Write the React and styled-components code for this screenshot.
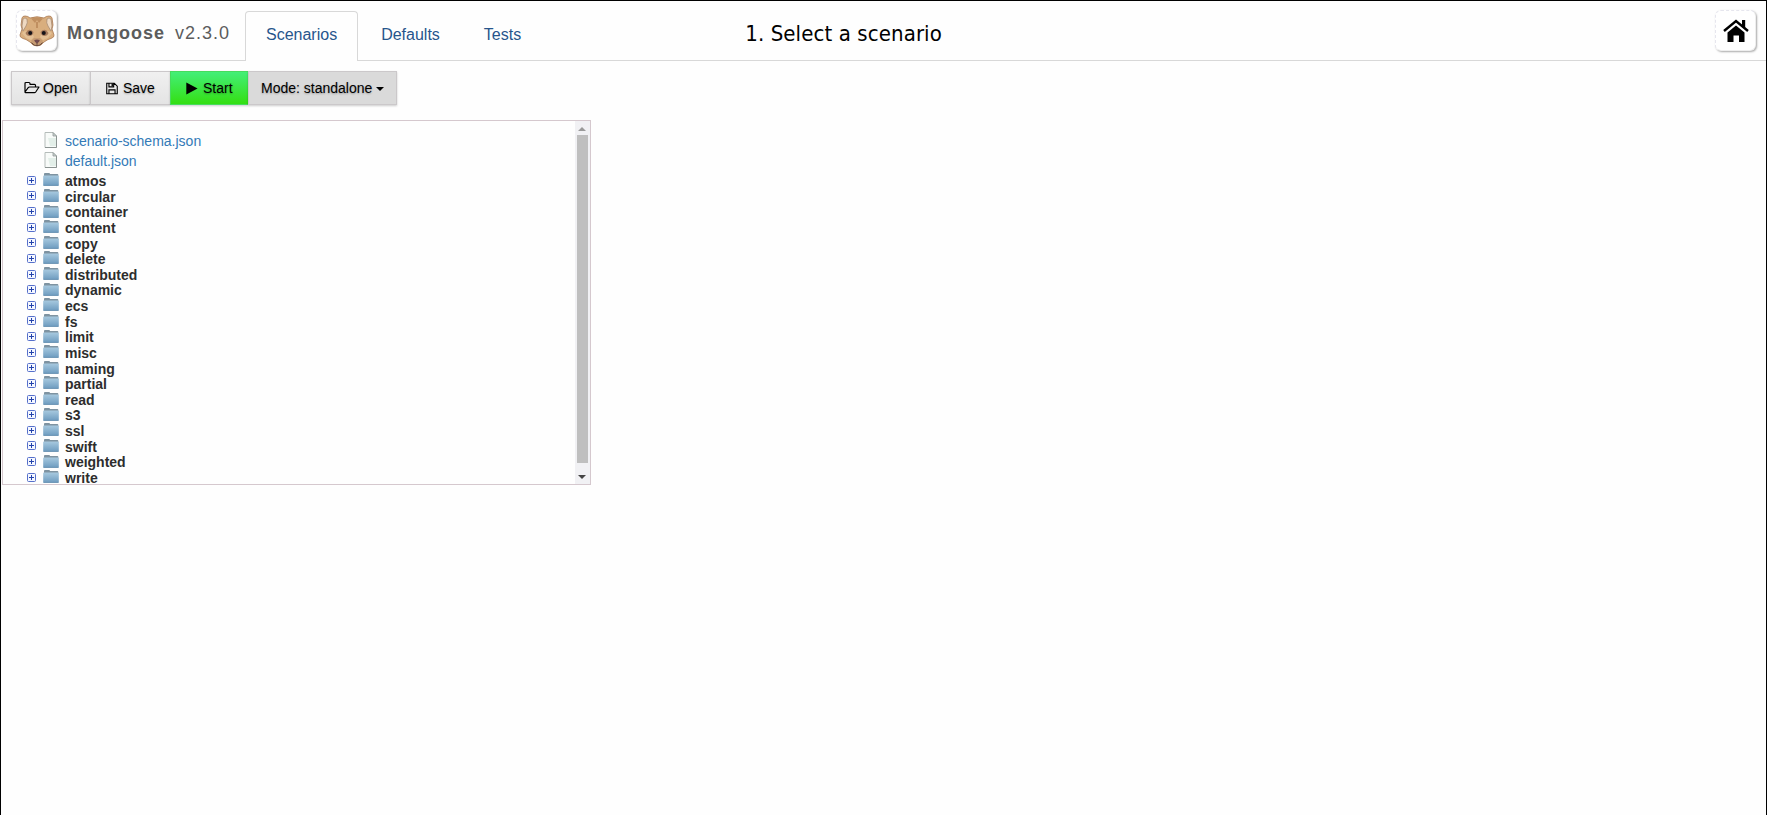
import React from 'react';
import styled, { createGlobalStyle } from 'styled-components';

const Global = createGlobalStyle`
  *, *::before, *::after { box-sizing: border-box; }
  html, body { margin: 0; padding: 0; overflow: hidden; }
  body { font: 14px/20px "Liberation Sans", Arial, sans-serif; color: #333; background: #fefefe; }
`;
const Page = styled.div`
  height: 815px; padding-left: 1px;
  border: 1px solid #000; border-bottom: 0;
  background: #fefefe;
`;
const Header = styled.header`
  display: flex; align-items: flex-start;
  height: 60px; padding: 9px 10px 0 14px;
  border-bottom: 1px solid #d8d8d8;
`;
const Tile = styled.div`
  display: flex; align-items: center; justify-content: center;
  width: 41px; height: 41px; border-radius: 6px;
  border: 1px dashed #e6e6ee; background: #fff;
  border-right: 1px solid #eee; border-bottom: 1px solid #eee;
  box-shadow: 1px 1px 2px #aaa;
`;
const Brand = styled.div`
  display: flex; width: 188px; padding-left: 10px;
  font-size: 18px; line-height: 24px; letter-spacing: 1px; color: #5c5c5c;
  margin-top: 11px;
`;
const Version = styled.span`margin-left: 10px;`;
const Tabs = styled.nav`display: flex; gap: 2px; margin-top: 1px;`;
const Tab = styled.a`
  height: 50px; padding: 13px 20px 0;
  font-size: 16px; line-height: 20px; color: #27558c;
  border: 1px solid ${(p) => (p.$active ? '#d8d8d8' : 'transparent')};
  border-bottom: 0; border-radius: 4px 4px 0 0;
  background: ${(p) => (p.$active ? '#fefefe' : 'transparent')};
`;
const Caption = styled.div`
  margin: 9px auto 0 203px;
  font: 22px/30px "DejaVu Sans Condensed", "DejaVu Sans", sans-serif;
  font-stretch: condensed; color: #000; white-space: nowrap; letter-spacing: .1px;
`;
const Toolbar = styled.div`display: flex; height: 34px; margin: 10px 0 15px 9px;`;
const fills = {
  plain: 'linear-gradient(#f0f0f0, #e4e4e4)',
  start: 'linear-gradient(#43ef78, #34df12)',
  mode: '#dadada',
};
const Button = styled.button`
  display: flex; align-items: center; white-space: nowrap;
  width: ${(p) => p.$w}px; height: 34px; margin: 0; padding: 0 0 0 ${(p) => p.$pad || 12}px;
  border: 1px solid #cbc8ca; border-right-width: ${(p) => (p.$kind === 'mode' ? 1 : 0)}px;
  ${(p) => p.$kind === 'start' && 'border-color: #46dc5c;'}
  background: ${(p) => fills[p.$kind]};
  box-shadow: 0 1px 2px rgba(0, 0, 0, .2);
  font: 14px/20px "Liberation Sans", Arial, sans-serif; color: #000;
  text-shadow: 0 1px 2px rgba(0, 0, 0, .3);
  svg { flex: none; }
`;
const Label = styled.span`margin-left: ${(p) => p.$gap}px;`;
const Caret = styled.i`
  margin-left: 4px; margin-top: 1px;
  border: 4px solid transparent; border-top-color: #000; border-bottom: 0;
`;
const Panel = styled.section`
  display: flex; justify-content: space-between;
  width: 589px; height: 365px; overflow: hidden;
  border: 1px solid #d5c8ce;
`;
const Tree = styled.ul`list-style: none; margin: 0; padding: 10px 0 0 24px;`;
const File = styled.li`
  display: flex; align-items: center; height: 20px; padding-left: 17px; color: #337ab7;
  svg { margin: -2px 7px 0 0; }
`;
const Folder = styled.li`
  display: flex; align-items: center; height: 15.63px;
  font-weight: bold; line-height: 15.63px; color: #2d2d2d;
  ${File} + & { margin-top: 3px; }
  svg { flex: none; margin-top: -3px; }
  svg + svg { margin: -4px 6px 0 7px; }
`;
const ScrollBar = styled.div`
  display: flex; flex-direction: column; align-items: center;
  width: 15px; padding-right: 1px; background: #f1f1f4;
`;
const Thumb = styled.div`width: 11px; height: 328px; background: #bfbfbf;`;
const Arrow = styled.div`
  display: flex; align-items: center; justify-content: center; height: ${(p) => p.$h}px;
  &::after {
    content: ''; border: 4px solid transparent;
    ${(p) => (p.$up ? 'border-top: 0; border-bottom-color: #999; margin-top: 2px;' : 'border-bottom: 0; border-top-color: #444; margin-top: 6px;')}
  }
`;

const Mongoose = () => (
  <svg width="36" height="32" viewBox="0 0 36 32">
    <path d="M3 3Q3.5 1 6 1Q9 1 11 3Q18 .5 25 3Q27 1 30 1Q32.5 1 33 3L34 10L33 14L35 20L34.5 22L32 23.5L29 24.5L25 27L22 30Q18 32 14 30L11 27L7 24.5L4 23.5L1.5 22L1 20L3 14L2 10Z" fill="#d9ae7e" stroke="#a87853" strokeWidth=".8" />
    <path d="M4 4Q6 2 8 4Q9 8 7 11L4 16L3 11ZM32 4Q30 2 28 4Q27 8 29 11L32 16L33 11Z" fill="#efd9c2" stroke="#a08672" strokeWidth=".7" />
    <path d="M12 3.5L16 8L18 5L20 8L24 3.5L18 2.2ZM17 7H19V13H17Z" fill="#c08f60" />
    <path d="M3 18Q7 14 13 18L15 22L12 25L7 23ZM33 18Q29 14 23 18L21 22L24 25L29 23Z" fill="#e3c096" />
    <path d="M6.5 18Q10 12 14.5 17Q14 21 10.5 21Q7.5 21 6.5 18M29.5 18Q26 12 21.5 17Q22 21 25.5 21Q28.5 21 29.5 18" fill="#a57a5c" />
    <circle cx="11.2" cy="18" r="2" fill="#171419" />
    <circle cx="24.8" cy="18" r="2" fill="#171419" />
    <path d="M12 26L15 23H21L24 26L21 29H15Z" fill="#c69b73" />
    <path d="M15.2 25Q18 23.8 20.8 25Q20.3 27.5 18 28.5Q15.7 27.5 15.2 25" fill="#714a4d" />
    <path d="M18 28V30M12.5 27.5Q15 31 18 30.5Q21 31 23.5 27.5" fill="none" stroke="#63483f" strokeWidth="1" />
  </svg>
);
const Home = () => (
  <svg width="26" height="24" viewBox="0 0 26 24">
    <path d="M1 12L13 2L25 12" fill="none" stroke="#000" strokeWidth="2.4" />
    <path d="M19 1h3.2v8L19 6.5zM4.5 13.4L13 6.4l8.5 7V23H16v-6.5h-5.5V23h-6z" fill="#000" />
  </svg>
);
const OpenIcon = () => (
  <svg width="16" height="14" viewBox="0 0 16 14" fill="none" stroke="#000" strokeWidth="1.2" strokeLinejoin="round">
    <path d="M1 11V2.5Q1 1.5 2 1.5H5Q6 1.5 6 2.5V3.3H10.5Q11.5 3.3 11.5 4.3V6M1 11L4.2 6.7Q4.7 6 5.5 6H15L11.7 11Q11.2 11.7 10.4 11.7H1.6Q1 11.7 1 11" />
  </svg>
);
const SaveIcon = () => (
  <svg width="12" height="13" viewBox="0 0 13 13" fill="none" stroke="#000" strokeWidth="1.2">
    <path d="M.8.8H9L12.2 4V12.2H.8ZM3.2 12V8H9.8V12M3.2 1V4.7H8.3V1" />
    <path d="M6 1h1.5v3H6z" fill="#000" stroke="none" />
  </svg>
);
const PlayIcon = () => (
  <svg width="12" height="13" viewBox="0 0 12 13"><path d="M.3.4L11.6 6.5L.3 12.6Z" fill="#000" /></svg>
);
const FileIcon = () => (
  <svg width="14" height="16" viewBox="0 0 14 16">
    <path d="M1 .5H9L12.5 4V15.5H1Z" fill="#f8fbf9" stroke="#b5bcba" />
    <path d="M4 6H12V14H6Z" fill="#e3efe9" />
    <path d="M9 .5V4H12.5Z" fill="#c9d1cf" stroke="#929a99" strokeWidth=".8" />
    <path d="M1 15.5H12.5V4" fill="none" stroke="#8b9391" />
  </svg>
);
const PlusIcon = () => (
  <svg width="9" height="9" viewBox="0 0 9 9">
    <rect x=".5" y=".5" width="8" height="8" rx="1" fill="#f4f7ff" stroke="#5670cb" />
    <path d="M2 4.5H7M4.5 2V7" stroke="#2343ab" />
  </svg>
);
const FolderIcon = () => (
  <svg width="16" height="13" viewBox="0 0 16 13">
    <defs>
      <linearGradient id="folder" x1="0" y1="0" x2="0" y2="1">
        <stop offset="0" stopColor="#a7c9df" /><stop offset="1" stopColor="#6d9bbf" />
      </linearGradient>
    </defs>
    <path d="M1 3V.8Q1 0 2 0H6Q7 0 7 1H14.5Q15.3 1 15.3 2V4H1Z" fill="#7e93a1" />
    <rect x=".2" y="2.5" width="15.6" height="10.2" rx=".6" fill="url(#folder)" />
    <path d="M.5 12.4H15.5" stroke="#5e89aa" strokeWidth=".7" />
  </svg>
);

const files = ['scenario-schema.json', 'default.json'];
const folders = ['atmos', 'circular', 'container', 'content', 'copy', 'delete', 'distributed', 'dynamic', 'ecs', 'fs', 'limit', 'misc', 'naming', 'partial', 'read', 's3', 'ssl', 'swift', 'weighted', 'write'];

export default function App() {
  return (
    <>
      <Global />
      <Page>
        <Header>
          <Tile><Mongoose /></Tile>
          <Brand><b>Mongoose</b><Version>v2.3.0</Version></Brand>
          <Tabs>
            <Tab $active>Scenarios</Tab>
            <Tab>Defaults</Tab>
            <Tab>Tests</Tab>
          </Tabs>
          <Caption>1. Select a scenario</Caption>
          <Tile><Home /></Tile>
        </Header>
        <Toolbar>
          <Button $kind="plain" $w={79}><OpenIcon /><Label $gap={3}>Open</Label></Button>
          <Button $kind="plain" $w={80} $pad={15}><SaveIcon /><Label $gap={5}>Save</Label></Button>
          <Button $kind="start" $w={78} $pad={15}><PlayIcon /><Label $gap={5}>Start</Label></Button>
          <Button $kind="mode" $w={149}><Label $gap={0}>Mode: standalone</Label><Caret /></Button>
        </Toolbar>
        <Panel>
          <Tree>
            {files.map((f) => <File key={f}><FileIcon />{f}</File>)}
            {folders.map((f) => <Folder key={f}><PlusIcon /><FolderIcon />{f}</Folder>)}
          </Tree>
          <ScrollBar><Arrow $up $h={14} /><Thumb /><Arrow $h={21} /></ScrollBar>
        </Panel>
      </Page>
    </>
  );
}
